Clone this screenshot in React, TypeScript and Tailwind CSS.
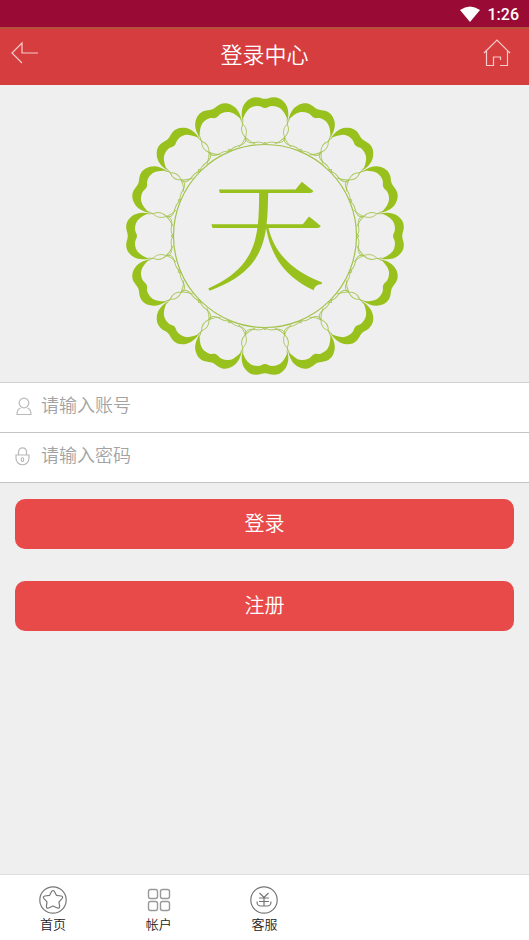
const PETALS = Array.from({ length: 16 }, (_, i) => i * 22.5);

function Emblem() {
  return (
    <svg viewBox="-140 -140 280 280" className="size-70" role="img" aria-label="天">
      {PETALS.map((angle) => (
        <g key={angle} transform={`rotate(${angle})`}>
          <path
            fill="#98c11d"
            d="M-22.7 -116C-24 -122 -23.5 -129 -19.5 -133.5C-16 -137.8 -12 -139 -8.5 -138.8C-5 -138.6 -3 -137.2 0 -137.2C3 -137.2 5 -138.6 8.5 -138.8C12 -139 16 -137.8 19.5 -133.5C23.5 -129 24 -122 22.7 -116C21.5 -119 20 -122.5 17.5 -125.5C14.5 -129 11 -130 7 -130C4 -130 2.5 -128 0 -128C-2.5 -128 -4 -130 -7 -130C-11 -130 -14.5 -129 -17.5 -125.5C-20 -122.5 -21.5 -119 -22.7 -116Z"
          />
          <g fill="none" stroke="#a3c34c" strokeOpacity="0.85" strokeWidth="1">
            <path d="M-22.7 -118C-20.5 -115 -24 -114 -22 -111.5C-18 -108 -18 -103 -19.5 -99C-20 -94 -15 -92.5 -10 -93.5C-5 -94.5 -3 -93.5 0 -92C3 -93.5 5 -94.5 10 -93.5C15 -92.5 20 -94 19.5 -99C18 -103 18 -108 22 -111.5C24 -114 20.5 -115 22.7 -118" />
            <path d="M-19.5 -99C-21 -95 -23 -92 -26 -89M19.5 -99C21 -95 23 -92 26 -89" />
            <path d="M-2 -92L0 -94L2 -92" />
          </g>
        </g>
      ))}
      <circle r="91.5" fill="none" stroke="#a3c34c" strokeWidth="1.2" />
      <text
        x="0"
        y="44"
        textAnchor="middle"
        fill="#98c11d"
        className="font-['Noto_Serif_CJK_SC','Noto_Sans_CJK_SC',serif] text-[122px] font-normal"
      >
        天
      </text>
    </svg>
  );
}

function StatusBar() {
  return (
    <div className="flex h-[29px] items-center justify-end gap-2 border-b-2 border-[#b5513a] bg-[#990b35] pr-2.5 text-white">
      <svg viewBox="0 0 20 16" className="h-4 w-5" fill="currentColor" aria-hidden="true">
        <path d="M0 4Q10 -3 20 4L10 16Z" />
      </svg>
      <span className="pt-0.5 font-[Roboto,sans-serif] text-base leading-6 font-medium">1:26</span>
    </div>
  );
}

function Header() {
  return (
    <header className="flex h-14 items-center justify-between bg-[#d53d3e] px-2.5 pb-2 text-white">
      <button type="button" aria-label="返回" className="w-9">
        <svg viewBox="0 0 28 24" className="h-6 w-7" fill="none" stroke="#f8cccc" strokeWidth="1.2" aria-hidden="true">
          <path d="M12 22L2 12L12 2V12H28" />
        </svg>
      </button>
      <h1 className="text-[22px] leading-8 font-[350]">登录中心</h1>
      <a href="#home" aria-label="首页" className="w-9">
        <svg viewBox="0 0 28 28" className="size-7" fill="none" stroke="#f8cccc" strokeWidth="1.2" aria-hidden="true">
          <path d="M1 14L14 1L27 14M3.5 12V26.5H10.5V18H17.5V21M24.5 12V26.5H17" />
        </svg>
      </a>
    </header>
  );
}

const FIELD = "flex h-[50px] items-center gap-2 border-b border-[#c4c4c4] bg-white px-3.5 pb-2";
const INPUT = "min-w-0 flex-1 bg-transparent text-[18px] leading-7 font-[350] text-gray-700 outline-none placeholder:text-[#a3a3a3]";
const BUTTON = "h-[50px] w-full rounded-[10px] bg-[#e84a49] pb-0.5 text-xl font-[350] text-white";
const TAB = "flex flex-col items-center pt-[11px] text-[13px] leading-5 font-[350] text-[#222]";

export default function App() {
  return (
    <div className="flex min-h-screen flex-col bg-[#efefef] font-['Noto_Sans_CJK_SC',sans-serif]">
      <StatusBar />
      <Header />
      <main className="flex-1">
        <div className="flex justify-center pt-[11px] pb-1.5">
          <Emblem />
        </div>
        <form onSubmit={(event) => event.preventDefault()}>
          <div className="border-t border-[#d0d0d0]">
            <div className={FIELD}>
              <label htmlFor="account" aria-label="账号" className="pt-1">
                <svg viewBox="0 0 19 20" className="h-5 w-[19px]" fill="none" stroke="#b9b9b9" strokeWidth="1.2" aria-hidden="true">
                  <circle cx="10" cy="7" r="4.8" />
                  <path d="M6.5 12C4 13 3 15 3 18.5H17C17 15 16 13 13.5 12" />
                </svg>
              </label>
              <input id="account" type="text" placeholder="请输入账号" className={INPUT} />
            </div>
            <div className={FIELD}>
              <label htmlFor="password" aria-label="密码" className="pt-1">
                <svg viewBox="0 0 19 20" className="h-5 w-[19px]" fill="none" stroke="#b9b9b9" strokeWidth="1.2" aria-hidden="true">
                  <path d="M4.5 9V6C4.5 0.5 12.5 0.5 12.5 6V9M2 9H15V12C15 21 2 21 2 12Z" />
                  <ellipse cx="8.5" cy="13.5" rx="1.2" ry="2" />
                </svg>
              </label>
              <input id="password" type="password" placeholder="请输入密码" className={INPUT} />
            </div>
          </div>
          <div className="flex flex-col gap-8 px-[15px] pt-4">
            <button type="submit" className={BUTTON}>登录</button>
            <button type="button" className={BUTTON}>注册</button>
          </div>
        </form>
      </main>
      <nav className="grid h-[66px] grid-cols-5 border-t border-[#dedede] bg-white">
        <a href="#home" className={TAB}>
          <svg viewBox="0 0 28 28" className="size-7" fill="none" stroke="#777" strokeWidth="1.2" strokeLinejoin="round" aria-hidden="true">
            <circle cx="14" cy="14" r="13.2" />
            <path d="M12.6 5.4Q14 3.6 15.4 5.4L17.4 9.3L22.2 10Q24.6 10.6 23 12.6L20 15.8L20.6 20.2Q20.6 22.8 18.4 22L14 20L9.6 22Q7.4 22.8 7.4 20.2L8 15.8L5 12.6Q3.4 10.6 5.8 10L10.6 9.3Z" />
          </svg>
          首页
        </a>
        <a href="#account-center" className={TAB}>
          <svg viewBox="0 0 28 28" className="size-7" fill="none" stroke="#999" strokeWidth="1.4" aria-hidden="true">
            <rect x="3.5" y="3.5" width="9" height="9" rx="2" />
            <rect x="15.5" y="3.5" width="9" height="9" rx="2" />
            <rect x="3.5" y="15.5" width="9" height="9" rx="2" />
            <rect x="15.5" y="15.5" width="9" height="9" rx="2" />
          </svg>
          帐户
        </a>
        <a href="#service" className={TAB}>
          <svg viewBox="0 0 28 28" className="size-7" fill="none" stroke="#777" strokeWidth="1.2" aria-hidden="true">
            <circle cx="14" cy="14" r="13.2" />
            <path d="M9.5 7L14 11.5L18.5 7M9 12H19M9 15.5H19M14 11.5V19.5M7 15.5C7 19 8 20 11 20H17C20 20 21 19 21 15.5" />
          </svg>
          客服
        </a>
      </nav>
    </div>
  );
}
